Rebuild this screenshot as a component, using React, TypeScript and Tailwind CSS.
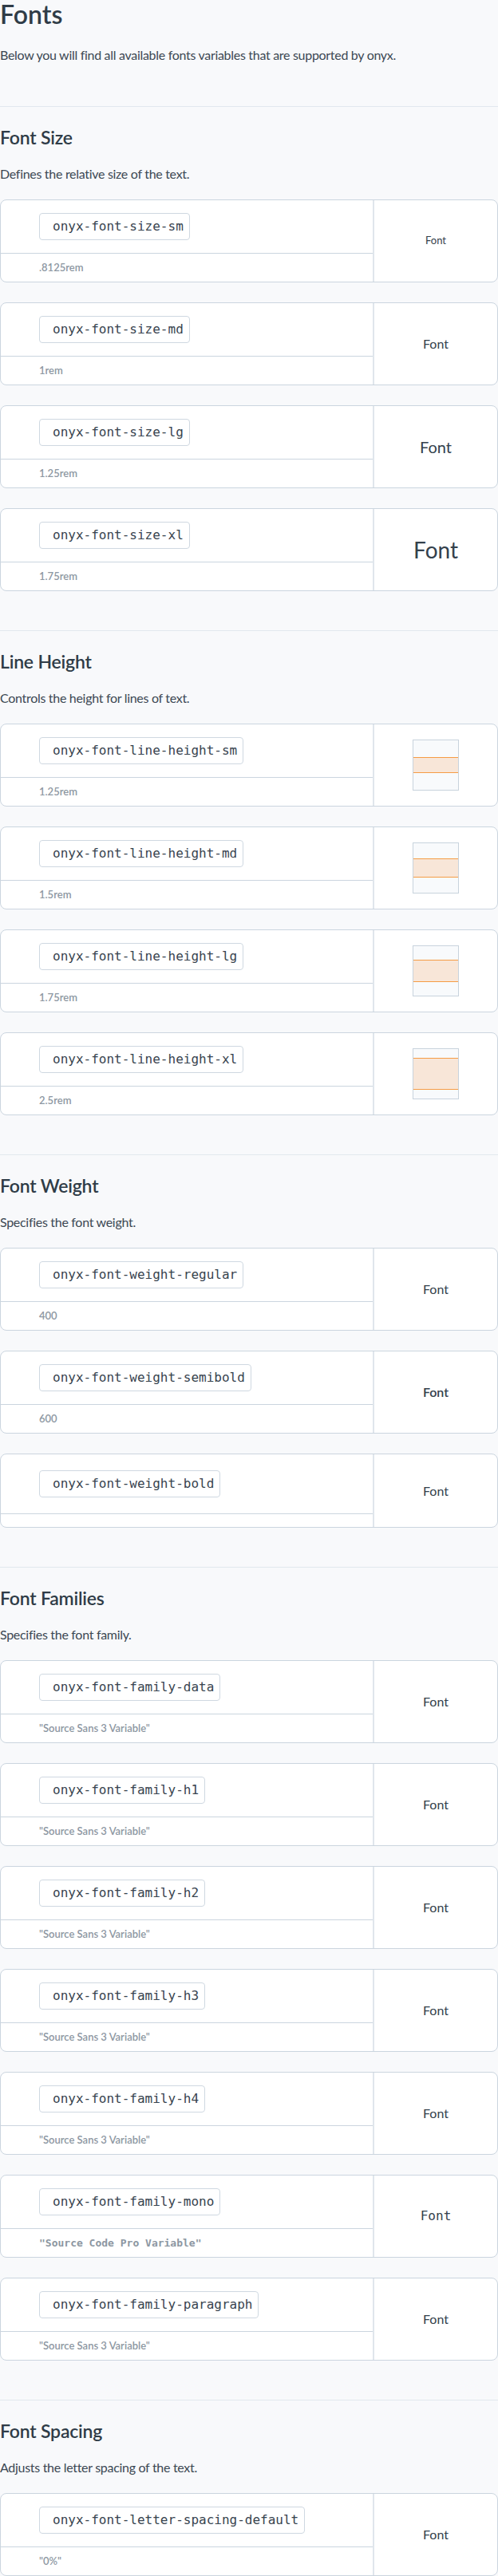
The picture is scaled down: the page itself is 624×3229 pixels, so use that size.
import React from 'react';

interface Token {
    name: string;
    value: string;
    mono?: boolean;
    preview: React.ReactNode;
}

interface Section {
    title: string;
    description: string;
    tokens: Token[];
}

const FontSample: React.FC<{ className?: string }> = ({ className = '' }) => (
    <span className={`text-[#34414c] ${className}`}>Font</span>
);

const LineHeightBox: React.FC<{ bandClass: string }> = ({ bandClass }) => (
    <div className="flex h-16 w-[58px] items-center border border-[#c8d3dd] bg-[#f8fafc]">
        <div className={`w-full border-y border-[#f59c45] bg-[#f8e6d8] ${bandClass}`} />
    </div>
);

const sections: Section[] = [
    {
        title: 'Font Size',
        description: 'Defines the relative size of the text.',
        tokens: [
            { name: 'onyx-font-size-sm', value: '.8125rem', preview: <FontSample className="text-[13px]" /> },
            { name: 'onyx-font-size-md', value: '1rem', preview: <FontSample className="text-[16px]" /> },
            { name: 'onyx-font-size-lg', value: '1.25rem', preview: <FontSample className="text-[20px]" /> },
            { name: 'onyx-font-size-xl', value: '1.75rem', preview: <FontSample className="text-[28px]" /> },
        ],
    },
    {
        title: 'Line Height',
        description: 'Controls the height for lines of text.',
        tokens: [
            { name: 'onyx-font-line-height-sm', value: '1.25rem', preview: <LineHeightBox bandClass="h-5" /> },
            { name: 'onyx-font-line-height-md', value: '1.5rem', preview: <LineHeightBox bandClass="h-6" /> },
            { name: 'onyx-font-line-height-lg', value: '1.75rem', preview: <LineHeightBox bandClass="h-7" /> },
            { name: 'onyx-font-line-height-xl', value: '2.5rem', preview: <LineHeightBox bandClass="h-10" /> },
        ],
    },
    {
        title: 'Font Weight',
        description: 'Specifies the font weight.',
        tokens: [
            { name: 'onyx-font-weight-regular', value: '400', preview: <FontSample className="font-normal" /> },
            { name: 'onyx-font-weight-semibold', value: '600', preview: <FontSample className="font-semibold" /> },
            { name: 'onyx-font-weight-bold', value: '', preview: <FontSample /> },
        ],
    },
    {
        title: 'Font Families',
        description: 'Specifies the font family.',
        tokens: [
            { name: 'onyx-font-family-data', value: '"Source Sans 3 Variable"', preview: <FontSample /> },
            { name: 'onyx-font-family-h1', value: '"Source Sans 3 Variable"', preview: <FontSample /> },
            { name: 'onyx-font-family-h2', value: '"Source Sans 3 Variable"', preview: <FontSample /> },
            { name: 'onyx-font-family-h3', value: '"Source Sans 3 Variable"', preview: <FontSample /> },
            { name: 'onyx-font-family-h4', value: '"Source Sans 3 Variable"', preview: <FontSample /> },
            {
                name: 'onyx-font-family-mono',
                value: '"Source Code Pro Variable"',
                mono: true,
                preview: <FontSample className="font-['DejaVu_Sans_Mono',monospace]" />,
            },
            { name: 'onyx-font-family-paragraph', value: '"Source Sans 3 Variable"', preview: <FontSample /> },
        ],
    },
    {
        title: 'Font Spacing',
        description: 'Adjusts the letter spacing of the text.',
        tokens: [
            { name: 'onyx-font-letter-spacing-default', value: '"0%"', preview: <FontSample className="tracking-normal" /> },
        ],
    },
];

const TokenCard: React.FC<{ token: Token }> = ({ token }) => (
    <div className="flex min-h-[93px] overflow-hidden rounded-lg border border-[#cbd5df] bg-white">
        <div className="flex w-[466px] flex-col">
            <div className="flex flex-1 items-center py-4 pl-12">
                <span className="inline-flex h-[34px] items-center rounded border border-[#cfd8e1] bg-white pl-4 pr-[7px] font-['DejaVu_Sans_Mono',monospace] text-[16px] text-[#38444f]">
                    {token.name}
                </span>
            </div>
            <div
                className={`border-t border-[#cbd5df] py-2 pl-12 text-[13px] leading-[19px] font-semibold text-[#8d97a2] ${
                    token.mono ? "font-['DejaVu_Sans_Mono',monospace]" : ''
                }`}
            >
                {token.value}
            </div>
        </div>
        <div className="flex flex-1 items-center justify-center border-l-2 border-[#e0e6ec]">{token.preview}</div>
    </div>
);

export default function App() {
    return (
        <div className="min-h-screen bg-[#f8f9fb] font-['Lato',sans-serif] text-[#2f3c47]">
            <h1 className="text-[32px] leading-9 font-semibold">Fonts</h1>
            <p className="mt-[21px] text-base leading-6 tracking-[-0.3px] text-[#3c4853]">
                Below you will find all available fonts variables that are supported by onyx.
            </p>

            <div className="mt-[52px]">
                {sections.map(section => (
                    <section key={section.title} className="border-t border-[#e2e8ee] pt-[22px] pb-[49px] last:pb-0">
                        <h2 className="text-[23px] leading-8 font-semibold tracking-[-0.2px]">{section.title}</h2>
                        <p className="mt-[18px] text-base leading-6 tracking-[-0.3px] text-[#3c4853]">
                            {section.description}
                        </p>
                        <div className="mt-5 flex flex-col gap-[25px]">
                            {section.tokens.map(token => (
                                <TokenCard key={token.name} token={token} />
                            ))}
                        </div>
                    </section>
                ))}
            </div>
        </div>
    );
}
